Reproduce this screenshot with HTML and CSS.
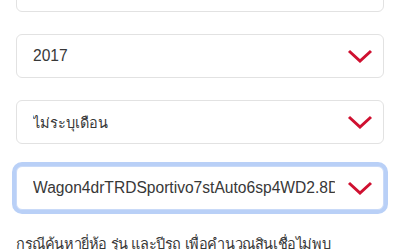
FILE: index.html
```html
<!DOCTYPE html>
<html lang="th">
<head>
  <meta charset="UTF-8">
  <title>คำนวณสินเชื่อ</title>
  <link rel="stylesheet" href="styles.css">
</head>
<body>
  <!-- ฟอร์มเลือกรถ (เลื่อนลงมาแล้ว) -->
  <div class="form">
    <div class="select">
      <span class="value">Toyota</span>
      <svg class="chevron" viewBox="0 0 26 14"><path d="M2 2 L13 12 L24 2"/></svg>
    </div>
    <div class="select">
      <span class="value">2017</span>
      <svg class="chevron" viewBox="0 0 26 14"><path d="M2 2 L13 12 L24 2"/></svg>
    </div>
    <div class="select">
      <span class="value thai">ไม่ระบุเดือน</span>
      <svg class="chevron" viewBox="0 0 26 14"><path d="M2 2 L13 12 L24 2"/></svg>
    </div>
    <div class="select focused">
      <span class="value">Wagon4drTRDSportivo7stAuto6sp4WD2.8DT</span>
      <svg class="chevron" viewBox="0 0 26 14"><path d="M2 2 L13 12 L24 2"/></svg>
    </div>
    <p class="note">กรณีค้นหายี่ห้อ รุ่น และปีรถ เพื่อคำนวณสินเชื่อไม่พบ</p>
  </div>
</body>
</html>
```

FILE: styles.css
```css
/* 기본 */
* { box-sizing: border-box; margin: 0; padding: 0; }
body {
  font-family: 'Liberation Sans', 'Noto Sans', Arial, sans-serif;
  background: #fff;
  color: #383838;
  overflow: hidden;
}
.form {
  padding: 0 16px;
  margin-top: -32px;
}
.select {
  display: flex;
  align-items: center;
  height: 44px;
  padding: 0 10px 0 16px;
  margin-bottom: 22px;
  border: 1px solid #e2e2e2;
  border-radius: 6px;
  background: #fff;
}
.select.focused {
  border-color: #c9daf8;
  box-shadow: 0 0 0 4px #b9d0f7;
}
.value {
  flex: 1;
  font-size: 15.6px;
  white-space: nowrap;
  overflow: hidden;
  margin-right: 12px;
}
.value.thai { font-size: 14.5px; }
.chevron {
  width: 26px;
  height: 14px;
  fill: none;
  stroke: #cf1030;
  stroke-width: 3;
}
.note {
  margin-top: 20px;
  font-size: 14.5px;
  letter-spacing: -0.4px;
  white-space: nowrap;
}
```
